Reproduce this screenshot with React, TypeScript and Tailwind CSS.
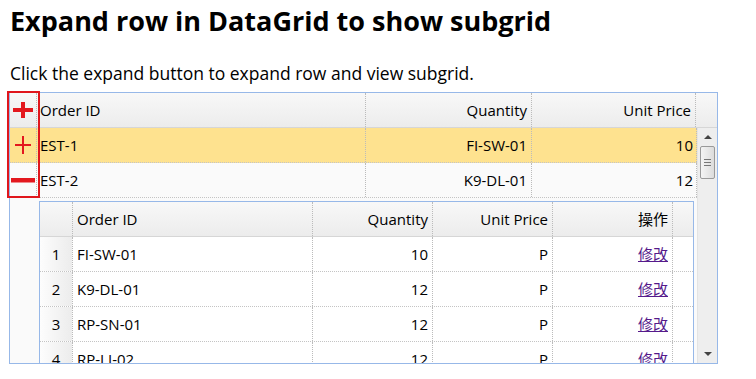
import React from "react";

const mainRows = [
  { id: "EST-1", qty: "FI-SW-01", price: "10", open: false },
  { id: "EST-2", qty: "K9-DL-01", price: "12", open: true },
];

const subRows = [
  { n: 1, id: "FI-SW-01", qty: "10", price: "P" },
  { n: 2, id: "K9-DL-01", qty: "12", price: "P" },
  { n: 3, id: "RP-SN-01", qty: "12", price: "P" },
  { n: 4, id: "RP-LI-02", qty: "12", price: "P" },
];

function BoldPlus() {
  return (
    <svg width="20" height="16" viewBox="0 0 20 16">
      <rect x="0" y="6" width="20" height="4" fill="#e3181e" />
      <rect x="8" y="0" width="4" height="16" fill="#e3181e" />
    </svg>
  );
}

function ThinPlus() {
  return (
    <svg width="16" height="18" viewBox="0 0 16 18">
      <rect x="0" y="8" width="16" height="2" fill="#e3181e" />
      <rect x="7" y="0" width="2" height="18" fill="#e3181e" />
    </svg>
  );
}

function Minus() {
  return (
    <svg width="24" height="5" viewBox="0 0 24 5">
      <rect x="0" y="0" width="24" height="4.5" fill="#e3181e" />
    </svg>
  );
}

function ScrollBar() {
  return (
    <div className="w-[20px] shrink-0 bg-[#eeeeee] flex flex-col items-center border-l border-[#e4e4e4]">
      <div className="h-[18px] flex items-center justify-center">
        <div className="w-0 h-0 border-l-[4px] border-r-[4px] border-b-[4px] border-l-transparent border-r-transparent border-b-[#444]" />
      </div>
      <div className="w-[15px] h-[33px] rounded-[2px] border border-[#9a9a9a] bg-gradient-to-r from-[#f4f4f4] to-[#dcdcdc] flex flex-col items-center justify-center gap-[2px]">
        <div className="w-[7px] h-px bg-[#777]" />
        <div className="w-[7px] h-px bg-[#777]" />
        <div className="w-[7px] h-px bg-[#777]" />
      </div>
      <div className="flex-1" />
      <div className="h-[18px] flex items-center justify-center">
        <div className="w-0 h-0 border-l-[4px] border-r-[4px] border-t-[4px] border-l-transparent border-r-transparent border-t-[#444]" />
      </div>
    </div>
  );
}

function SubGrid() {
  return (
    <div className="ml-[29px] mt-[3px] w-[655px] border border-[#97b8e8] bg-white">
      <div className="flex h-[35px] bg-gradient-to-b from-[#f8f8f8] to-[#ececec] border-b border-[#d6d6d6]">
        <div className="w-[33px] border-r border-dotted border-[#bbb]" />
        <div className="w-[240px] pl-[4px] flex items-center border-r border-dotted border-[#bbb]">Order ID</div>
        <div className="w-[120px] pr-[4px] flex items-center justify-end border-r border-dotted border-[#bbb]">Quantity</div>
        <div className="w-[120px] pr-[4px] flex items-center justify-end border-r border-dotted border-[#bbb]">Unit Price</div>
        <div className="w-[120px] pr-[4px] flex items-center justify-end border-r border-dotted border-[#bbb]">操作</div>
        <div className="flex-1" />
      </div>
      {subRows.map((r) => (
        <div key={r.n} className="flex h-[35px] border-b border-dotted border-[#c4c4c4]">
          <div className="w-[33px] flex items-center justify-center bg-gradient-to-r from-[#fdfdfd] to-[#ececec] border-r border-dotted border-[#bbb]">
            {r.n}
          </div>
          <div className="w-[240px] pl-[4px] flex items-center border-r border-dotted border-[#bbb]">{r.id}</div>
          <div className="w-[120px] pr-[4px] flex items-center justify-end border-r border-dotted border-[#bbb]">{r.qty}</div>
          <div className="w-[120px] pr-[4px] flex items-center justify-end border-r border-dotted border-[#bbb]">{r.price}</div>
          <div className="w-[120px] pr-[4px] flex items-center justify-end border-r border-dotted border-[#bbb]">
            <a className="text-[#551a8b] underline cursor-pointer">修改</a>
          </div>
          <div className="flex-1" />
        </div>
      ))}
    </div>
  );
}

export default function App() {
  return (
    <div
      className="w-[756px] h-[379px] bg-white text-black overflow-hidden pl-[10px]"
      style={{ fontFamily: '"Open Sans", "Noto Sans CJK SC", sans-serif' }}
    >
      <h1 className="text-[27px] font-bold leading-[30px] pt-[6px]">Expand row in DataGrid to show subgrid</h1>
      <p className="text-[17.5px] leading-[24px] mt-[25px]">Click the expand button to expand row and view subgrid.</p>

      <div className="relative mt-[7px] -ml-[1px] w-[709px] h-[272px] border border-[#97b8e8] bg-[#fafafa] text-[15px] flex flex-col overflow-hidden">
        {/* header */}
        <div className="flex h-[35px] shrink-0 bg-gradient-to-b from-[#f8f8f8] to-[#ececec] border-b border-[#d6d6d6]">
          <div className="w-[27px] flex items-center justify-center border-r border-dotted border-[#bbb]">
            <BoldPlus />
          </div>
          <div className="w-[329px] pl-[3px] flex items-center border-r border-dotted border-[#bbb]">Order ID</div>
          <div className="w-[166px] pr-[4px] flex items-center justify-end border-r border-dotted border-[#bbb]">Quantity</div>
          <div className="w-[164px] pr-[4px] flex items-center justify-end border-r border-dotted border-[#bbb]">Unit Price</div>
          <div className="flex-1" />
        </div>

        <div className="flex flex-1 min-h-0">
          <div className="flex-1 min-w-0 overflow-hidden">
            {mainRows.map((r) => (
              <div
                key={r.id}
                className={`flex h-[35px] border-b border-dotted border-[#c4c4c4] ${r.open ? "bg-[#fafafa]" : "bg-[#fee28f]"}`}
              >
                <div className="w-[27px] flex items-center justify-center border-r border-dotted border-[#bbb]">
                  {r.open ? <Minus /> : <ThinPlus />}
                </div>
                <div className="w-[329px] pl-[3px] flex items-center border-r border-dotted border-[#bbb]">{r.id}</div>
                <div className="w-[166px] pr-[4px] flex items-center justify-end border-r border-dotted border-[#bbb]">{r.qty}</div>
                <div className="flex-1 pr-[3px] flex items-center justify-end border-r border-dotted border-[#bbb]">{r.price}</div>
              </div>
            ))}
            <SubGrid />
          </div>
          <ScrollBar />
        </div>
      </div>

      {/* annotation box */}
      <div className="absolute left-[7px] top-[91px] w-[33px] h-[107px] border-2 border-[#e0161c]" />
    </div>
  );
}
